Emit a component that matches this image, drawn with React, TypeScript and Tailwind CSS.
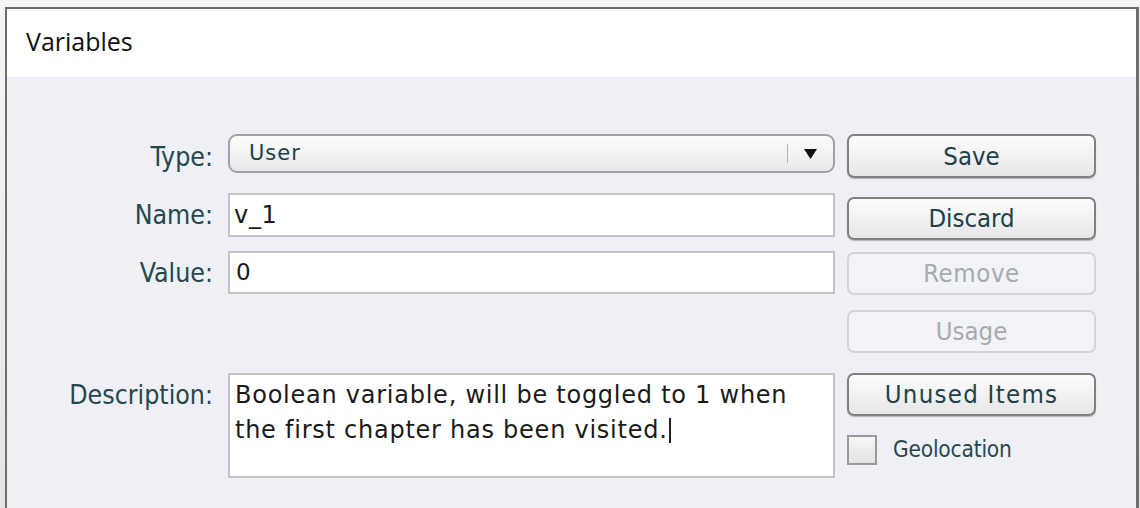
import React from 'react'

const labelFont = { fontFamily: '"DejaVu Sans", "Liberation Sans", sans-serif' }

function Label({ text, className = '' }: { text: string; className?: string }) {
  return (
    <div
      className={`flex w-[206px] shrink-0 items-center justify-end font-stretch-condensed text-[26.5px] text-[#27474d] ${className}`}
      style={labelFont}
    >
      {text}
    </div>
  )
}

function Button({ text, disabled, className = '' }: { text: string; disabled?: boolean; className?: string }) {
  return (
    <div
      className={`flex h-[43px] w-[249px] shrink-0 items-center justify-center rounded-[7px] border-2 font-stretch-condensed text-[25.5px] ${
        disabled
          ? 'border-[#d2d4d8] bg-[#f2f3f6] text-[#a7abaf]'
          : 'border-[#808080] bg-gradient-to-b from-[#fdfdfd] to-[#e6e6e8] text-[#1f4047] shadow-[0_1px_1px_rgba(0,0,0,0.25)]'
      } ${className}`}
      style={labelFont}
    >
      {text}
    </div>
  )
}

export default function App() {
  const mono = { fontFamily: '"DejaVu Sans", "Verdana", sans-serif' }

  return (
    <div className="flex h-[508px] w-[1140px] flex-col overflow-hidden bg-gradient-to-b from-[#f6f6f6] to-[#e4e4e4] pl-[5px] pr-[1px] pt-[7px]">
      <div className="flex flex-1 flex-col border-l-2 border-r-[3px] border-t-2 border-[#6e6e6e]">
        <div
          className="flex h-[68px] shrink-0 items-center bg-white pl-[19px] pb-[2px] text-[25px] text-[#111]"
          style={{ fontFamily: '"Open Sans", "Noto Sans", sans-serif' }}
        >
          Variables
        </div>

        <div className="flex flex-1 flex-col bg-[#eff0f5]">
          {/* Type */}
          <div className="mt-[57px] flex items-start">
            <Label text="Type:" className="h-[44px] pt-[2px]" />
            <div className="ml-[15px] flex h-[39px] w-[607px] shrink-0 items-center rounded-[9px] border-2 border-[#a2a2a2] bg-gradient-to-b from-[#fcfcfc] to-[#e8e8ea] pl-[19px] pr-[16px]">
              <span className="flex-1 text-[21px] tracking-[1px] text-[#1f4047]" style={mono}>
                User
              </span>
              <span className="h-[19px] w-px bg-[#b4b4b4]" />
              <svg className="ml-[16px]" width="13" height="10" viewBox="0 0 13 10">
                <path d="M0 0 H13 L6.5 10 Z" fill="#111" />
              </svg>
            </div>
            <Button text="Save" className="ml-[12px] h-[44px]" />
          </div>

          {/* Name */}
          <div className="mt-[15px] flex items-start">
            <Label text="Name:" className="h-[44px]" />
            <div
              className="ml-[15px] flex h-[44px] w-[607px] shrink-0 items-center border-2 border-[#c4c4c4] bg-white pl-[4px] text-[24px] tracking-[0.7px] text-[#1a1a1a]"
              style={mono}
            >
              v_1
            </div>
            <Button text="Discard" className="ml-[12px] mt-[4px]" />
          </div>

          {/* Value */}
          <div className="mt-[11px] flex items-start">
            <Label text="Value:" className="h-[43px]" />
            <div
              className="ml-[15px] flex h-[43px] w-[607px] shrink-0 items-center border-2 border-[#c4c4c4] bg-white pl-[6px] text-[23px] text-[#1a1a1a]"
              style={mono}
            >
              0
            </div>
            <Button text="Remove" disabled className="ml-[12px] mt-[1px] tracking-[0.6px]" />
          </div>

          {/* Usage */}
          <div className="mt-[15px] flex items-start pl-[840px]">
            <Button text="Usage" disabled />
          </div>

          {/* Description */}
          <div className="mt-[20px] flex items-start">
            <Label text="Description:" className="h-[44px]" />
            <div
              className="ml-[15px] h-[105px] w-[607px] shrink-0 border-2 border-[#c4c4c4] bg-white pl-[5px] pt-[3px] text-[24px] leading-[35px] tracking-[0.75px] text-[#1a1a1a]"
              style={mono}
            >
              Boolean variable, will be toggled to 1 when
              <br />
              the first chapter has been visited.
              <span className="ml-[1px] inline-block h-[25px] w-[2px] translate-y-[5px] bg-[#222]" />
            </div>
            <div className="ml-[12px] flex flex-col">
              <Button text="Unused Items" className="tracking-[1.3px]" />
              <div className="mt-[17px] flex items-center">
                <div className="h-[30px] w-[30px] border-2 border-[#9a9a9a] bg-gradient-to-b from-[#f7f7f7] to-[#e2e2e4]" />
                <span
                  className="ml-[16px] font-stretch-condensed text-[22.5px] tracking-[-0.2px] text-[#27474d]"
                  style={labelFont}
                >
                  Geolocation
                </span>
              </div>
            </div>
          </div>
        </div>
      </div>
    </div>
  )
}
